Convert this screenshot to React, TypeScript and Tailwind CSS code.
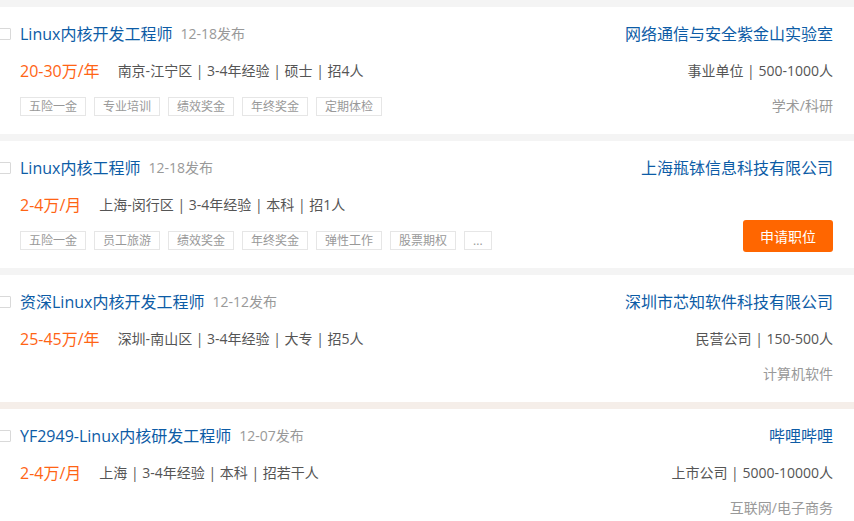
import React from 'react'

interface Job {
  id: number
  title: string
  date: string
  salary: string
  meta: string[]
  tags: string[]
  company: string
  companyMeta: string[]
  industry: string
  hovered?: boolean
  gapColor: string
}

const jobs: Job[] = [
  {
    id: 1,
    title: 'Linux内核开发工程师',
    date: '12-18发布',
    salary: '20-30万/年',
    meta: ['南京-江宁区', '3-4年经验', '硕士', '招4人'],
    tags: ['五险一金', '专业培训', '绩效奖金', '年终奖金', '定期体检'],
    company: '网络通信与安全紫金山实验室',
    companyMeta: ['事业单位', '500-1000人'],
    industry: '学术/科研',
    gapColor: 'bg-[#f4f4f4]',
  },
  {
    id: 2,
    title: 'Linux内核工程师',
    date: '12-18发布',
    salary: '2-4万/月',
    meta: ['上海-闵行区', '3-4年经验', '本科', '招1人'],
    tags: ['五险一金', '员工旅游', '绩效奖金', '年终奖金', '弹性工作', '股票期权', '...'],
    company: '上海瓶钵信息科技有限公司',
    companyMeta: [],
    industry: '',
    hovered: true,
    gapColor: 'bg-[#f4f4f4]',
  },
  {
    id: 3,
    title: '资深Linux内核开发工程师',
    date: '12-12发布',
    salary: '25-45万/年',
    meta: ['深圳-南山区', '3-4年经验', '大专', '招5人'],
    tags: [],
    company: '深圳市芯知软件科技有限公司',
    companyMeta: ['民营公司', '150-500人'],
    industry: '计算机软件',
    gapColor: 'bg-[#f4f4f4]',
  },
  {
    id: 4,
    title: 'YF2949-Linux内核研发工程师',
    date: '12-07发布',
    salary: '2-4万/月',
    meta: ['上海', '3-4年经验', '本科', '招若干人'],
    tags: [],
    company: '哔哩哔哩',
    companyMeta: ['上市公司', '5000-10000人'],
    industry: '互联网/电子商务',
    gapColor: 'bg-[#f5eee9]',
  },
]

function JobCard({ job }: { job: Job }) {
  return (
    <div className="flex justify-between bg-white h-[127px] pt-[15px] pl-[20px] pr-[21px]">
      {/* Left: title, salary, welfare tags */}
      <div className="flex flex-col">
        <div className="flex items-center h-[24px]">
          <span className="-ml-[22px] mr-[9px] w-[13px] h-[12px] border border-[#d9d9d9] bg-white rounded-[1px]" />
          <span className="text-[16px] text-[#0d5ca6] leading-[24px]">{job.title}</span>
          <span className="ml-2 text-[14px] text-[#999] leading-[24px]">{job.date}</span>
        </div>

        <div className="flex items-center h-[24px] mt-[13px]">
          <span className="text-[16px] text-[#ff6414] leading-[24px]">{job.salary}</span>
          <span className="ml-[18px] text-[14px] text-[#555] leading-[24px]">
            {job.meta.join(' | ')}
          </span>
        </div>

        {job.tags.length > 0 && (
          <div className="flex gap-2 mt-[14px]">
            {job.tags.map((tag) => (
              <span
                key={tag}
                className="h-[19px] px-2 border border-[#e6e6e6] text-[12px] leading-[17px] text-[#999]"
              >
                {tag}
              </span>
            ))}
          </div>
        )}
      </div>

      {/* Right: company info or apply button */}
      <div className="flex flex-col items-end">
        <div className="h-[24px] text-[16px] leading-[24px] text-[#0d5ca6]">{job.company}</div>
        {job.hovered ? (
          <button className="mt-[40px] w-[90px] h-[32px] rounded-[3px] bg-[#ff6600] text-white text-[14px]">
            申请职位
          </button>
        ) : (
          <>
            <div className="h-[24px] mt-[13px] text-[14px] leading-[24px] text-[#555]">
              {job.companyMeta.join(' | ')}
            </div>
            <div className="h-[19px] mt-[13px] text-[14px] leading-[19px] text-[#999]">
              {job.industry}
            </div>
          </>
        )}
      </div>
    </div>
  )
}

export default function App() {
  return (
    <div className="w-[854px] h-[521px] overflow-hidden bg-[#f4f4f4] font-['Open_Sans','Noto_Sans_CJK_SC',sans-serif]">
      {jobs.map((job) => (
        <div key={job.id}>
          <div className={`h-[7px] ${job.gapColor}`} />
          <JobCard job={job} />
        </div>
      ))}
    </div>
  )
}
